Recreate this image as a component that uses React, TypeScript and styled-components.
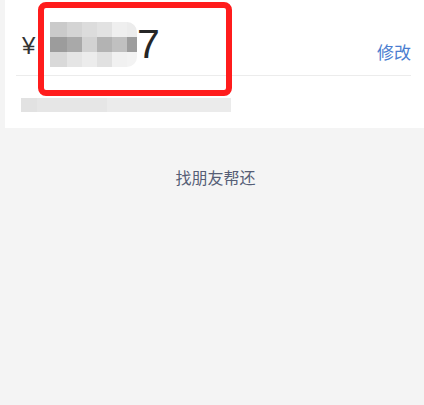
import styled, { createGlobalStyle } from 'styled-components';

const GlobalStyle = createGlobalStyle`
  html, body {
    margin: 0;
    padding: 0;
    background: #f4f4f4;
    font-family: "Noto Sans CJK SC", "Liberation Sans", sans-serif;
  }
`;

const mosaic = [
  ['#cacaca', '#d4d4d4', '#dcdcdc', '#e2e2e2', '#efefef', '#ececec'],
  ['#9c9c9c', '#a9a9a9', '#d2d2d2', '#b3b3b3', '#c0c0c0', '#9d9d9d'],
  ['#d9d9d9', '#e5e5e5', '#ececec', '#e1e1e1', '#f1f1f1', '#f3f3f3'],
];

const widths = [17, 15, 15, 15, 15, 10];

const App: React.FC = () => {
  return (
    <Page>
      <GlobalStyle />
      <Card>
        <AmountRow>
          <Yen>¥</Yen>
          <Mosaic>
            {mosaic.map((row, r) =>
              row.map((c, i) => (
                <Cell
                  key={`${r}-${i}`}
                  style={{ background: c, width: widths[i] }}
                  $round={i === row.length - 1 ? (r === 0 ? 'top' : r === 2 ? 'bottom' : '') : ''}
                />
              ))
            )}
          </Mosaic>
          <Digit>7</Digit>
          <Edit>修改</Edit>
        </AmountRow>
        <Divider />
        <BlurLine>
          <span className="a" />
          <span className="b" />
          <span className="c" />
        </BlurLine>
        <Highlight />
      </Card>
      <Friends>找朋友帮还</Friends>
    </Page>
  );
};
export default App;

const Page = styled.div`
  width: 424px;
  height: 405px;
  background: #f4f4f4;
  padding-left: 5px;
  box-sizing: border-box;
`;

const Card = styled.div`
  position: relative;
  background: #fff;
  height: 128px;
  padding: 22px 13px 0 11px;
  box-sizing: border-box;
`;

const AmountRow = styled.div`
  display: flex;
  align-items: center;
  height: 45px;
`;

const Yen = styled.span`
  font-family: "Liberation Sans", sans-serif;
  font-size: 24px;
  color: #333;
  margin: 3px 0 0 6px;
  width: 28px;
`;

const Mosaic = styled.div`
  display: grid;
  grid-template-columns: 17px 15px 15px 15px 15px 10px;
  grid-template-rows: 15px 15px 15px;
`;

const Cell = styled.div<{ $round: string }>`
  height: 15px;
  border-top-right-radius: ${(p) => (p.$round === 'top' ? '10px' : '0')};
  border-bottom-right-radius: ${(p) => (p.$round === 'bottom' ? '10px' : '0')};
`;

const Digit = styled.span`
  font-family: "Liberation Sans", sans-serif;
  font-size: 41px;
  color: #262626;
  line-height: 1;
`;

const Edit = styled.span`
  margin-left: auto;
  font-size: 17px;
  color: #4a7dd0;
  margin-top: 14px;
`;

const Divider = styled.div`
  height: 1px;
  background: #ececec;
  margin: 8px 0 0;
`;

const BlurLine = styled.div`
  display: flex;
  margin: 22px 0 0 5px;
  height: 14px;

  span {
    height: 14px;
  }
  .a {
    width: 16px;
    background: #e2e2e2;
  }
  .b {
    width: 70px;
    background: #e6e6e6;
  }
  .c {
    width: 124px;
    background: #ebebeb;
  }
`;

const Highlight = styled.div`
  position: absolute;
  left: 33px;
  top: 2px;
  width: 194px;
  height: 94px;
  border: 6px solid #ff1c1c;
  border-radius: 8px;
  box-sizing: border-box;
`;

const Friends = styled.div`
  text-align: center;
  margin-top: 37px;
  font-size: 16px;
  color: #565e76;
  padding-left: 2px;
`;
